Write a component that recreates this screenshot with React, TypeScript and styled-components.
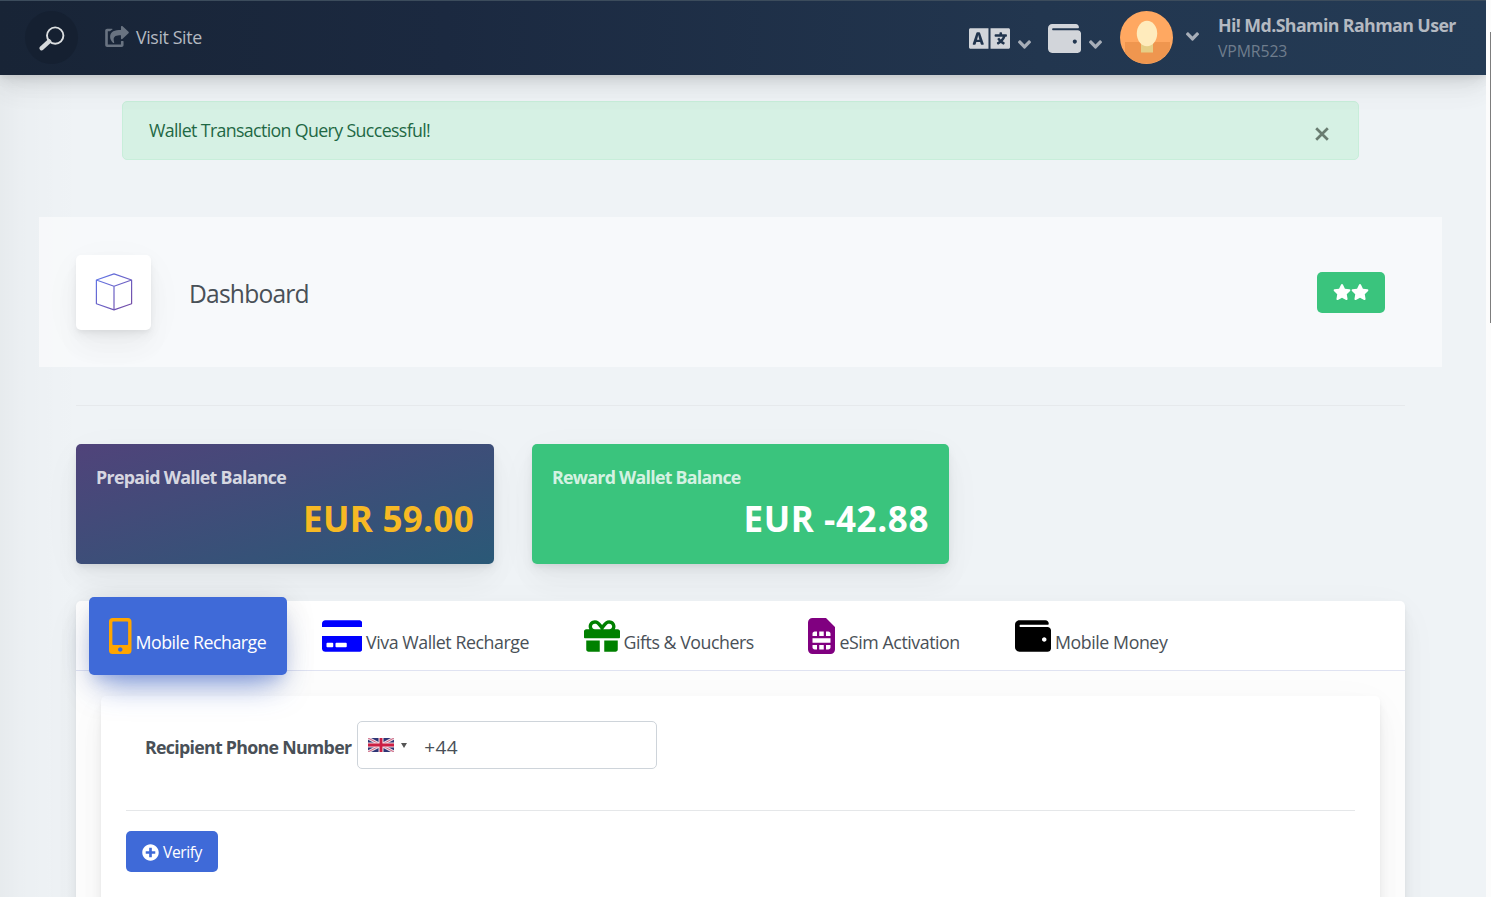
import React from 'react';
import styled, { createGlobalStyle } from 'styled-components';
import {
  FaAngleDown, FaCreditCard, FaGift, FaLanguage, FaMobileAlt,
  FaPlusCircle, FaShareSquare, FaSimCard, FaStar, FaWallet,
} from 'react-icons/fa';

const shadow = `0 9.4px 43.75px rgba(4,9,20,.03), 0 18.75px 28px rgba(4,9,20,.03),
  0 5px 10.6px rgba(4,9,20,.05), 0 2.5px 3.75px rgba(4,9,20,.03)`;

const GlobalStyle = createGlobalStyle`
  *, *::before, *::after { box-sizing: border-box; }
  html, body { margin: 0; height: 897px; overflow: hidden; }
  body { font-family: "Open Sans", "Noto Sans", sans-serif; font-size: 17.8px; color: #495057; background: #fcfcfc; }
  svg { display: block; flex: none; }
`;

const Screen = styled.div`display: flex; width: 1491px; height: 897px; overflow: hidden;`;
const Page = styled.div`
  width: 1486px; height: 897px; overflow: hidden;
  background: linear-gradient(to right, rgba(0,0,0,.035), rgba(0,0,0,.015) 22px, rgba(0,0,0,.003) 60px, transparent 84px), #eff3f6;
`;
const Track = styled.div`
  width: 5px; height: 897px; padding-top: 32px; background: #fcfcfc;
  display: flex; flex-direction: column; align-items: flex-end;
`;
const Thumb = styled.div`width: 1px; height: 291px; background: #7d7d7d;`;

const Label = styled.span<{ $ls?: number; $size?: number; $bold?: boolean; $drop?: number }>`
  white-space: nowrap;
  letter-spacing: ${p => p.$ls ?? -0.4}px;
  font-size: ${p => p.$size ?? 17.8}px;
  font-weight: ${p => (p.$bold ? 700 : 400)};
  padding-top: ${p => p.$drop ?? 0}px;
`;

const Header = styled.header`
  position: relative; height: 75px; display: flex; align-items: center;
  padding: 0 0 2px 25px; color: #b4b9c1;
  background: linear-gradient(to right, #182436, #1b2940 30%, #22364f 70%, #243b55);
  border-top: 1px solid #3c4c5c;
  box-shadow: ${shadow}, 0 5px 22px rgba(4,9,20,.07);
`;
const SearchButton = styled.div`
  width: 53px; height: 53px; border-radius: 50%; background: #152031; padding-top: 2px;
  display: flex; align-items: center; justify-content: center;
`;
const VisitLink = styled.div`
  display: flex; align-items: center; gap: 7px; margin-left: 27px;
  svg { color: #697381; margin-bottom: 2px; }
`;
const HeaderRight = styled.div`display: flex; align-items: center; margin-left: auto; width: 517px;`;
const MenuToggle = styled.div<{ $mr: number; $drop: number; $gap: number; $pt?: number }>`
  display: flex; align-items: center; gap: ${p => p.$gap}px; margin-right: ${p => p.$mr}px; color: #d2d5da;
  padding-top: ${p => p.$pt ?? 0}px;
  svg + svg { color: #a7aeb8; margin-top: ${p => p.$drop}px; }
`;
const UserInfo = styled.div`display: flex; flex-direction: column; line-height: 26px; margin-left: 18px; padding-top: 2px;`;
const UserCode = styled(Label)`color: #6f7d8d; line-height: 26px;`;

const Alert = styled.div`
  margin: 26px 127px 0 122px; height: 59px; padding: 0 28px 0 26px;
  display: flex; align-items: center; justify-content: space-between;
  border: 1px solid #c8eeda; border-radius: 5px; background: rgba(206,240,221,.75); color: #1f6844;
  span { margin-bottom: 2px; }
  svg { margin-top: 4px; }
`;
const TitleBar = styled.section`
  margin: 57px 44px 0 39px; height: 150px; padding: 0 57px 0 37px;
  display: flex; align-items: center; background: rgba(255,255,255,.53);
`;
const TitleIcon = styled.div`
  width: 75px; height: 75px; border-radius: 5px; background: #fff; box-shadow: ${shadow};
  display: flex; align-items: center; justify-content: center; margin-right: 38px;
`;
const Rating = styled.div`
  margin-left: auto; width: 68px; height: 41px; border-radius: 5px; background: #3ac47d; color: #fff;
  display: flex; align-items: center; justify-content: center; gap: 0;
`;
const Content = styled.main`padding: 38px 81px 0 76px;`;
const Rule = styled.div<{ $color: string; $mt?: number }>`
  height: 1px; background: ${p => p.$color}; margin-top: ${p => p.$mt ?? 0}px;
`;
const Balances = styled.div`display: flex; gap: 38px; margin-top: 38px;`;
const Balance = styled.div<{ $bg: string; $amount: string; $w: number }>`
  width: ${p => p.$w}px; height: 120px; border-radius: 5px; padding: 21px 20px 0;
  display: flex; flex-direction: column; background: ${p => p.$bg};
  box-shadow: ${shadow}; color: rgba(255,255,255,.8);
  span { line-height: 25px; }
  span + span { align-self: flex-end; color: ${p => p.$amount}; line-height: 58px; }
`;
const Card = styled.section`
  margin-top: 37px; height: 340px; border-radius: 5px; background: #fff; box-shadow: ${shadow};
`;
const Tabs = styled.nav`
  position: relative; z-index: 1; height: 70px; padding-left: 13px;
  display: flex; align-items: flex-start; border-bottom: 1px solid #e0e3f2;
`;
const Tab = styled.div<{ $active?: boolean; $left: number }>`
  display: flex; gap: 4px; height: 78px; margin-top: -4px; margin-left: ${p => p.$left}px;
  line-height: 24px; color: ${p => (p.$active ? '#fff' : '#495057')};
  ${p => p.$active && `
    width: 198px; padding-left: 20px; border-radius: 5px; background: #3f6ad8;
    box-shadow: 0 20px 32px -12px rgba(63,106,216,.56), 0 5px 31px rgba(0,0,0,.12), 0 10px 12px -6px rgba(63,106,216,.2);
  `}
  span { margin-top: 33px; }
`;
const TabIcon = styled.div<{ $color: string }>`margin-top: 21px; color: ${p => p.$color};`;
const TabBody = styled.div`height: 270px; padding: 25px 25px 0; background: #fdfdfd;`;
const Panel = styled.div`
  height: 260px; border-radius: 5px; padding: 24px 25px 0; background: #fff; box-shadow: ${shadow};
`;
const Field = styled.div`display: flex; align-items: center; gap: 6px; padding: 0 0 0 19px;`;
const PhoneInput = styled.div`
  width: 300px; height: 48px; border: 1px solid #ced4da; border-radius: 5px; background: #fff;
  display: flex; align-items: center; padding-left: 10px; margin-top: 1px;
`;
const Caret = styled.div`
  margin: 0 17px 0 7px; border: 3.5px solid transparent; border-top: 5px solid #555; border-bottom: 0;
`;
const VerifyButton = styled.div`
  margin-top: 20px; width: 92px; height: 41px; border-radius: 5px; background: #3f6ad8; color: #fff;
  display: flex; align-items: center; gap: 4px; padding: 1px 0 0 16px;
`;

const tabs = [
  { text: 'Viva Wallet Recharge', icon: <FaCreditCard size={36} style={{ width: 40.5 }} />, color: '#0000ff', left: 34.5, ls: -0.44 },
  { text: 'Gifts & Vouchers', icon: <FaGift size={36} />, color: '#008000', left: 54.5, ls: -0.47 },
  { text: 'eSim Activation', icon: <FaSimCard size={36} style={{ width: 27 }} />, color: '#800080', left: 54.7, ls: -0.45 },
  { text: 'Mobile Money', icon: <FaWallet size={36} />, color: '#000', left: 55.2, ls: -0.44 },
];

const Flag = () => (
  <svg width="26" height="14" viewBox="0 0 26 14">
    <rect width="26" height="14" fill="#2d3575" />
    <path d="M0 0 26 14M26 0 0 14" stroke="#ecd9e2" strokeWidth="3" />
    <path d="M0 0 26 14M26 0 0 14" stroke="#cf6680" strokeWidth="1" />
    <path d="M13 0V14M0 7H26" stroke="#f0dbe2" strokeWidth="5" />
    <path d="M13 0V14M0 7H26" stroke="#cc1f43" strokeWidth="2.8" />
  </svg>
);

export default function App() {
  return (
    <Screen>
      <GlobalStyle />
      <Page>
        <Header>
          <SearchButton>
            <svg width="26" height="26" viewBox="0 0 26 26" fill="none" strokeLinecap="round">
              <circle cx="16.2" cy="10.6" r="8.2" stroke="#dcdfe1" strokeWidth="1.9" />
              <path d="M10.1 16.4 2.7 23.2" stroke="#d6d9db" strokeWidth="4.4" />
            </svg>
          </SearchButton>
          <VisitLink>
            <FaShareSquare size={21} style={{ width: 24 }} />
            <Label $ls={-0.38}>Visit Site</Label>
          </VisitLink>
          <HeaderRight>
            <MenuToggle $mr={16} $drop={13} $gap={7} $pt={2}>
              <FaLanguage size={33} style={{ width: 41 }} />
              <FaAngleDown size={21} style={{ width: 15 }} />
            </MenuToggle>
            <MenuToggle $mr={17} $drop={13} $gap={7} $pt={2}>
              <FaWallet size={33} />
              <FaAngleDown size={21} style={{ width: 15 }} />
            </MenuToggle>
            <MenuToggle $mr={0} $drop={-1} $gap={12}>
              <svg width="53" height="53" viewBox="0 0 53 53">
                <circle cx="26.5" cy="26.5" r="26.5" fill="#ffa861" />
                <path d="M5 31H50V38A26.5 26.5 0 0 1 5 41.8Z" fill="#ef964f" />
                <rect x="21" y="30" width="12" height="11.5" fill="#e6ce86" />
                <ellipse cx="27" cy="22.5" rx="10.2" ry="12.7" fill="#ffebbc" />
              </svg>
              <FaAngleDown size={21} style={{ width: 15 }} />
            </MenuToggle>
            <UserInfo>
              <Label $bold $ls={-0.6}>Hi! Md.Shamin Rahman User</Label>
              <UserCode $size={15.8} $ls={-0.1}>VPMR523</UserCode>
            </UserInfo>
          </HeaderRight>
        </Header>
        <Alert>
          <Label $ls={-0.64}>Wallet Transaction Query Successful!</Label>
          <svg width="16" height="16" viewBox="0 0 16 16"><path d="M2.2 3.2 13.8 14.8M13.8 3.2 2.2 14.8" stroke="#697c70" strokeWidth="2.7" /></svg>
        </Alert>
        <TitleBar>
          <TitleIcon>
            <svg width="38" height="38" viewBox="0 0 38 38" fill="none">
              <defs>
                <linearGradient id="cube" x1="0" y1="0" x2="1" y2="1">
                  <stop stopColor="#6078ea" /><stop offset="1" stopColor="#764ba2" />
                </linearGradient>
              </defs>
              <path d="M1.4 7 19 .9 36.6 7V30.8L19 36.9 1.4 30.8ZM1.4 7 19 13.2 36.6 7M19 13.2V36.9" stroke="url(#cube)" strokeWidth="1.2" strokeLinejoin="round" />
            </svg>
          </TitleIcon>
          <Label $size={24.6} $ls={-0.79} $drop={2}>Dashboard</Label>
          <Rating><FaStar size={16} style={{ width: 18 }} /><FaStar size={16} style={{ width: 18 }} /></Rating>
        </TitleBar>
        <Content>
          <Rule $color="#e6e9ec" />
          <Balances>
            <Balance $w={418} $amount="#f7b924" $bg="linear-gradient(to bottom right, #50437a, #2a5977)">
              <Label $bold $ls={-0.67}>Prepaid Wallet Balance</Label>
              <Label $bold $size={35} $ls={0.3}>EUR 59.00</Label>
            </Balance>
            <Balance $w={417} $amount="#fff" $bg="#3ac47d">
              <Label $bold $ls={-0.73}>Reward Wallet Balance</Label>
              <Label $bold $size={35} $ls={0.6}>EUR -42.88</Label>
            </Balance>
          </Balances>
          <Card>
            <Tabs>
              <Tab $active $left={0}>
                <TabIcon $color="#ffa500"><FaMobileAlt size={36} style={{ width: 22.5 }} /></TabIcon>
                <Label $ls={-0.51}>Mobile Recharge</Label>
              </Tab>
              {tabs.map(t => (
                <Tab key={t.text} $left={t.left}>
                  <TabIcon $color={t.color}>{t.icon}</TabIcon>
                  <Label $ls={t.ls}>{t.text}</Label>
                </Tab>
              ))}
            </Tabs>
            <TabBody>
              <Panel>
                <Field>
                  <Label $bold $ls={-0.72} $drop={4}>Recipient Phone Number</Label>
                  <PhoneInput><Flag /><Caret /><Label $size={19} $ls={0.4} $drop={3}>+44</Label></PhoneInput>
                </Field>
                <Rule $color="#e5e7e9" $mt={41} />
                <VerifyButton><FaPlusCircle size={17} /><Label $size={15.6}>Verify</Label></VerifyButton>
              </Panel>
            </TabBody>
          </Card>
        </Content>
      </Page>
      <Track><Thumb /></Track>
    </Screen>
  );
}
